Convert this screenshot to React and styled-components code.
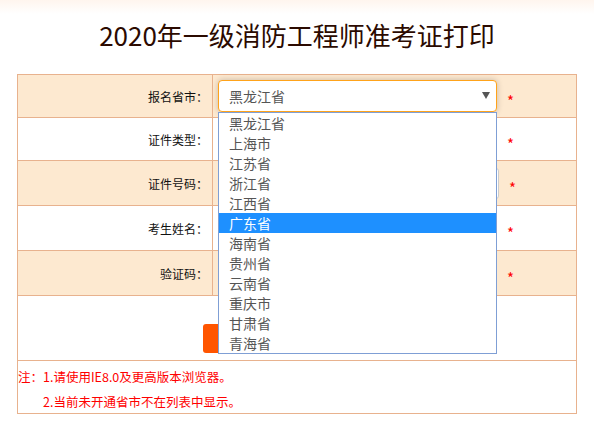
import React from 'react';
import styled, { createGlobalStyle } from 'styled-components';

const GlobalStyle = createGlobalStyle`
  body {
    margin: 0;
    background: linear-gradient(#fff5ee 0, #ffffff 14px) no-repeat;
    font-family: "Noto Sans CJK SC", "Noto Sans", sans-serif;
  }
`;

const Page = styled.div`
  width: 560px;
  margin: 0 auto;
`;

const Title = styled.h1`
  margin: 0;
  padding-top: 16px;
  height: 74px;
  box-sizing: border-box;
  text-align: center;
  font-size: 26px;
  font-weight: 400;
  line-height: 38px;
  color: #2b0a00;
`;

const Table = styled.div`
  border: 1px solid #e8b28e;
  border-bottom: none;
`;

const Row = styled.div`
  display: grid;
  grid-template-columns: 195px 1fr;
  height: ${p => p.h}px;
  background: ${p => (p.shaded ? '#fde9d0' : '#ffffff')};
  border-bottom: 1px solid #e8b28e;
`;

const Label = styled.div`
  display: flex;
  align-items: center;
  justify-content: flex-end;
  padding-right: 4px;
  border-right: 1px solid #e8b28e;
  font-size: 12px;
  color: #111;
`;

const Field = styled.div`
  display: flex;
  align-items: center;
  padding-left: 5px;
`;

const SelectWrap = styled.div`
  position: relative;
  width: 279px;
  height: 32px;
`;

const SelectBox = styled.div`
  box-sizing: border-box;
  height: 100%;
  display: flex;
  align-items: center;
  justify-content: space-between;
  padding: 0 6px 0 10px;
  border: 1px solid #ffa31a;
  border-radius: 4px;
  background: #fff;
  box-shadow: 0 0 6px rgba(0, 0, 0, 0.22);
  font-size: 14px;
  color: #555;
`;

const Arrow = styled.span`
  width: 0;
  height: 0;
  border-left: 4px solid transparent;
  border-right: 4px solid transparent;
  border-top: 7px solid #555;
  margin-top: -2px;
`;

const Dropdown = styled.ul`
  position: absolute;
  top: 100%;
  left: 0;
  width: 279px;
  box-sizing: border-box;
  margin: 0;
  padding: 0;
  list-style: none;
  background: #fff;
  border: 1px solid #7f9fd5;
  z-index: 5;
`;

const Option = styled.li`
  height: 20px;
  line-height: 20px;
  padding-left: 10px;
  font-size: 14px;
  color: ${p => (p.active ? '#fff' : '#555')};
  background: ${p => (p.active ? '#1e90ff' : 'transparent')};
`;

const Input = styled.div`
  box-sizing: border-box;
  width: ${p => p.w}px;
  height: 31px;
  border: 1px solid #ccc;
  border-radius: 3px;
  background: #fff;
`;

const Star = styled.span`
  margin-left: 10px;
  margin-top: 8px;
  color: #ff0000;
  font-size: 15px;
  line-height: 1;
`;

const ButtonRow = styled.div`
  height: 65px;
  box-sizing: border-box;
  padding: 28px 0 0 185px;
  border-bottom: 1px solid #e8b28e;
`;

const SubmitButton = styled.button`
  width: 188px;
  height: 29px;
  border: none;
  border-radius: 3px;
  background: #ff5500;
`;

const Notes = styled.div`
  height: 53px;
  box-sizing: border-box;
  padding-top: 3px;
  border-bottom: 1px solid #e8b28e;
`;

const Note = styled.p`
  margin: 0;
  padding-left: ${p => p.indent}px;
  font-size: 12.5px;
  line-height: 25px;
  color: #ff0000;
`;

const provinces = [
  '黑龙江省', '上海市', '江苏省', '浙江省', '江西省', '广东省',
  '海南省', '贵州省', '云南省', '重庆市', '甘肃省', '青海省',
];

const rows = [
  { label: '报名省市：', h: 42, shaded: true, select: true },
  { label: '证件类型：', h: 42, w: 279 },
  { label: '证件号码：', h: 44, shaded: true, w: 281 },
  { label: '考生姓名：', h: 44, w: 279 },
  { label: '验证码：', h: 44, shaded: true, w: 279 },
];

export default function App() {
  return (
    <Page>
      <GlobalStyle />
      <Title>2020年一级消防工程师准考证打印</Title>
      <Table>
        {rows.map(row => (
          <Row key={row.label} h={row.h} shaded={row.shaded}>
            <Label>{row.label}</Label>
            <Field>
              {row.select ? (
                <SelectWrap>
                  <SelectBox>
                    黑龙江省
                    <Arrow />
                  </SelectBox>
                  <Dropdown>
                    {provinces.map(name => (
                      <Option key={name} active={name === '广东省'}>{name}</Option>
                    ))}
                  </Dropdown>
                </SelectWrap>
              ) : (
                <Input w={row.w} />
              )}
              <Star>*</Star>
            </Field>
          </Row>
        ))}
        <ButtonRow>
          <SubmitButton />
        </ButtonRow>
        <Notes>
          <Note indent={0}>注：1.请使用IE8.0及更高版本浏览器。</Note>
          <Note indent={25}>2.当前未开通省市不在列表中显示。</Note>
        </Notes>
      </Table>
    </Page>
  );
}
